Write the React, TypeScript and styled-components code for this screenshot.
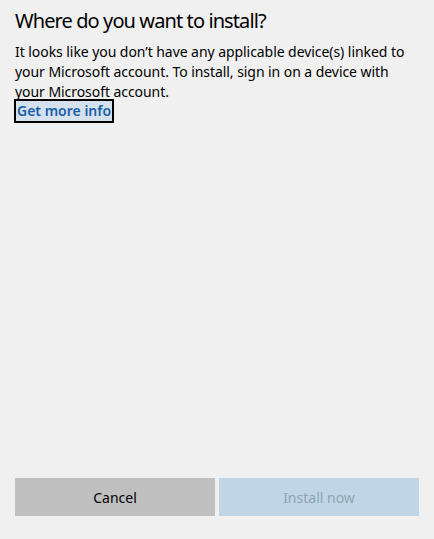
import styled, { createGlobalStyle } from "styled-components";

const GlobalStyle = createGlobalStyle`
    html, body {
        margin: 0;
        padding: 0;
        background: #f0f0f0;
    }
    * {
        box-sizing: border-box;
    }
`;

const Dialog = styled.div`
    display: flex;
    flex-direction: column;
    height: 539px;
    width: 434px;
    background: #f0f0f0;
    font-family: "Segoe UI", "Noto Sans", "Liberation Sans", sans-serif;
    color: #000;
`;

const Conteudo = styled.div`
    flex: 1;
    padding: 7px 15px 0 15px;
`;

const Titulo = styled.h1`
    margin: 0;
    font-size: 20px;
    font-weight: 400;
    line-height: 28px;
    letter-spacing: -0.9px;
    color: #000;
`;

const Texto = styled.p`
    margin: 7px 0 0 0;
    font-size: 14px;
    line-height: 20px;
    letter-spacing: -0.06px;
    width: 395px;
`;

const Link = styled.a`
    display: block;
    width: fit-content;
    margin: -3px 0 0 -1px;
    padding: 0 1px;
    border: 2px solid #000;
    background: #d5e1ec;
    color: #1b5ea8;
    font-size: 14px;
    font-weight: 600;
    line-height: 20px;
    text-decoration: none;
`;

const Rodape = styled.div`
    display: flex;
    gap: 4px;
    padding: 0 15px 23px 15px;
`;

const Botao = styled.button<{ $desativado?: boolean }>`
    flex: 1;
    height: 38px;
    border: none;
    font-family: inherit;
    font-size: 14px;
    background: ${(p) => (p.$desativado ? "#c0d6e6" : "#c0c0c0")};
    color: ${(p) => (p.$desativado ? "#8fa3b3" : "#000")};
`;

export default function App() {
    return (
        <Dialog>
            <GlobalStyle />
            <Conteudo>
                <Titulo>Where do you want to install?</Titulo>
                <Texto>
                    It looks like you don’t have any applicable device(s) linked to your Microsoft account. To install, sign in on a device with your Microsoft account.
                </Texto>
                <Link href="#">Get more info</Link>
            </Conteudo>
            <Rodape>
                <Botao>Cancel</Botao>
                <Botao $desativado>Install now</Botao>
            </Rodape>
        </Dialog>
    );
}
